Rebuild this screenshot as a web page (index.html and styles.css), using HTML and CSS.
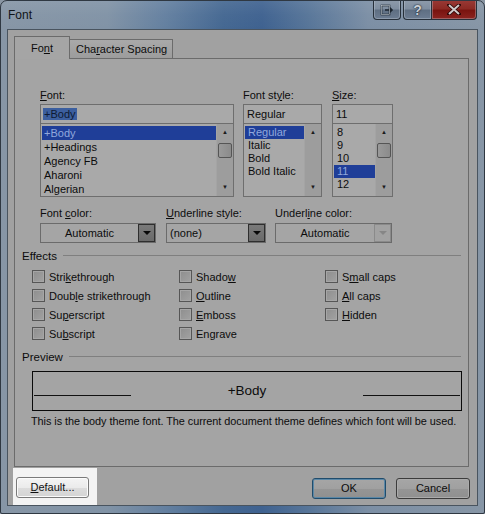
FILE: index.html
```html
<!DOCTYPE html>
<html>
<head>
<meta charset="utf-8">
<link rel="stylesheet" href="styles.css">
</head>
<body>
<div class="window">
  <div class="titlebar">
    <div class="title">Font</div>
    <div class="caption-buttons">
      <div class="cap cap-ctx">
        <svg width="14" height="12" viewBox="0 0 14 12"><rect x="1.5" y="1.5" width="8" height="9" fill="none" stroke="#1d2630" stroke-width="1.6"/><path d="M5 6 H12 M9.5 3.5 L12 6 L9.5 8.5" fill="none" stroke="#1d2630" stroke-width="1.6"/><rect x="1.5" y="1.5" width="8" height="9" fill="none" stroke="#c9d0d8" stroke-width="0.6"/></svg>
      </div>
      <div class="cap cap-help">?</div>
      <div class="cap cap-close">
        <svg width="14" height="11" viewBox="0 0 14 11"><path d="M2 1 L12 10 M12 1 L2 10" stroke="#2a0606" stroke-width="3.6" stroke-linecap="square"/><path d="M2 1 L12 10 M12 1 L2 10" stroke="#cfc8c8" stroke-width="2"/></svg>
      </div>
    </div>
  </div>
  <div class="client">
    <div class="tabs">
      <div class="tab tab-active">Fo<u>n</u>t</div>
      <div class="tab">Cha<u>r</u>acter Spacing</div>
    </div>
    <div class="panel">
      <div class="pickers">
        <div class="picker picker-font">
          <div class="label"><u>F</u>ont:</div>
          <div class="textbox"><span class="sel-text">+Body</span></div>
          <div class="listbox list14">
            <div class="items">
              <div class="item selected">+Body</div>
              <div class="item">+Headings</div>
              <div class="item">Agency FB</div>
              <div class="item">Aharoni</div>
              <div class="item">Algerian</div>
            </div>
            <div class="vscroll">
              <div class="arrow">&#9650;</div>
              <div class="track"><div class="thumb thumb-font"></div></div>
              <div class="arrow">&#9660;</div>
            </div>
          </div>
        </div>
        <div class="picker picker-style">
          <div class="label">Font st<u>y</u>le:</div>
          <div class="textbox">Regular</div>
          <div class="listbox list13">
            <div class="items">
              <div class="item selected">Regular</div>
              <div class="item">Italic</div>
              <div class="item">Bold</div>
              <div class="item">Bold Italic</div>
            </div>
            <div class="vscroll plain">
              <div class="arrow">&#9650;</div>
              <div class="track"></div>
              <div class="arrow">&#9660;</div>
            </div>
          </div>
        </div>
        <div class="picker picker-size">
          <div class="label"><u>S</u>ize:</div>
          <div class="textbox">11</div>
          <div class="listbox list13">
            <div class="items">
              <div class="item">8</div>
              <div class="item">9</div>
              <div class="item">10</div>
              <div class="item selected">11</div>
              <div class="item">12</div>
            </div>
            <div class="vscroll">
              <div class="arrow">&#9650;</div>
              <div class="track"><div class="thumb thumb-size"></div></div>
              <div class="arrow">&#9660;</div>
            </div>
          </div>
        </div>
      </div>

      <div class="combos">
        <div class="combo-field field-color">
          <div class="label">Font <u>c</u>olor:</div>
          <div class="combo">
            <div class="combo-text center">Automatic</div>
            <div class="combo-btn"><span class="tri"></span></div>
          </div>
        </div>
        <div class="combo-field field-ustyle">
          <div class="label"><u>U</u>nderline style:</div>
          <div class="combo">
            <div class="combo-text">(none)</div>
            <div class="combo-btn"><span class="tri"></span></div>
          </div>
        </div>
        <div class="combo-field field-ucolor">
          <div class="label">Underl<u>i</u>ne color:</div>
          <div class="combo">
            <div class="combo-text center">Automatic</div>
            <div class="combo-btn disabled"><span class="tri"></span></div>
          </div>
        </div>
      </div>

      <div class="group-head effects-head"><span>Effects</span><div class="rule"></div></div>
      <div class="effects">
        <div class="col col1">
          <label class="check"><span class="box"></span>Stri<u>k</u>ethrough</label>
          <label class="check"><span class="box"></span>Doub<u>l</u>e strikethrough</label>
          <label class="check"><span class="box"></span>Su<u>p</u>erscript</label>
          <label class="check"><span class="box"></span>Su<u>b</u>script</label>
        </div>
        <div class="col col2">
          <label class="check"><span class="box"></span>Shado<u>w</u></label>
          <label class="check"><span class="box"></span><u>O</u>utline</label>
          <label class="check"><span class="box"></span><u>E</u>mboss</label>
          <label class="check"><span class="box"></span>En<u>g</u>rave</label>
        </div>
        <div class="col col3">
          <label class="check"><span class="box"></span>S<u>m</u>all caps</label>
          <label class="check"><span class="box"></span><u>A</u>ll caps</label>
          <label class="check"><span class="box"></span><u>H</u>idden</label>
        </div>
      </div>

      <div class="group-head preview-head"><span>Preview</span><div class="rule"></div></div>
      <div class="preview">
        <div class="pline"></div>
        <div class="ptext">+Body</div>
        <div class="pline"></div>
      </div>
      <div class="desc">This is the body theme font. The current document theme defines which font will be used.</div>
    </div>
    <div class="footer">
      <div class="highlight">
        <div class="btn btn-default"><u>D</u>efault...</div>
      </div>
      <div class="right-btns">
        <div class="btn btn-ok">OK</div>
        <div class="btn btn-cancel">Cancel</div>
      </div>
    </div>
  </div>
</div>
</body>
</html>
```

FILE: styles.css
```css
* { box-sizing: border-box; }
html, body { margin: 0; padding: 0; }
body {
  width: 485px;
  height: 514px;
  overflow: hidden;
  background: #8a96a3;
  font-family: "Liberation Sans", Arial, sans-serif;
  font-size: 11px;
  color: #0c0c0c;
}
u { text-decoration: underline; text-underline-offset: 1px; }

.window {
  width: 485px;
  height: 514px;
  border: 1px solid #2f3842;
  border-radius: 7px 7px 2px 2px;
  background: linear-gradient(90deg, #8796a6 0%, #8193a6 22%, #6480a0 34%, #456892 46%, #3f6290 54%, #587699 64%, #7c8fa5 76%, #8796a6 100%);
  display: flex;
  flex-direction: column;
  overflow: hidden;
}

.titlebar {
  height: 29px;
  display: flex;
  justify-content: space-between;
  align-items: flex-start;
  background: linear-gradient(180deg, rgba(255,255,255,0.08) 0%, rgba(255,255,255,0.02) 50%, rgba(0,0,0,0) 100%);
}
.title {
  padding: 7px 0 0 7px;
  font-size: 12px;
  color: #101418;
  font-family: "Liberation Sans", Arial, sans-serif;
}
.caption-buttons {
  display: flex;
  margin-right: 7px;
  margin-top: -1px;
}
.cap {
  height: 20px;
  border: 1px solid #27303a;
  border-top: none;
  display: flex;
  align-items: center;
  justify-content: center;
  box-shadow: inset 0 0 0 1px rgba(200,210,222,0.35);
}
.cap-ctx {
  width: 28px;
  border-radius: 0 0 4px 4px;
  margin-right: 2px;
  background: linear-gradient(180deg, #8e9bab 0%, #7f8ea0 45%, #5f6f83 55%, #6c7d92 100%);
}
.cap-help {
  width: 28px;
  border-radius: 0 0 0 4px;
  background: linear-gradient(180deg, #8e9bab 0%, #7f8ea0 45%, #5f6f83 55%, #6c7d92 100%);
  font-weight: bold;
  font-size: 14px;
  color: #c8ced6;
  text-shadow: 0 0 2px #1d2630, 0 0 1px #1d2630;
  border-right: none;
}
.cap-close {
  width: 46px;
  border-radius: 0 0 4px 0;
  background: linear-gradient(180deg, #9a3a36 0%, #8c2a24 45%, #7a1410 55%, #8c2420 100%);
}

.client {
  flex: 1;
  margin: 0 6px 7px 6px;
  background: #a1a1a1;
  border: 1px solid #49545f;
  display: flex;
  flex-direction: column;
  padding: 0 0 0 6px;
}

.tabs {
  display: flex;
  align-items: flex-end;
  height: 28px;
  padding-top: 6px;
}
.tab {
  height: 19px;
  padding: 3px 5px 0 6px;
  border: 1px solid #6b6b6b;
  border-bottom: none;
  background: linear-gradient(180deg, #a9a9a9 0%, #9c9c9c 100%);
  font-size: 11px;
  margin-left: -1px;
}
.tab-active {
  width: 56px;
  margin-left: 0;
  padding: 5px 0 0 0;
  text-align: center;
  background: #a5a5a5;
  position: relative;
  z-index: 1;
  margin-bottom: -1px;
  height: 23px;
}

.panel {
  width: 455px;
  height: 409px;
  border: 1px solid #6b6b6b;
  background: #a4a4a4;
  padding: 29px 0 0 0;
  display: flex;
  flex-direction: column;
}

.label { height: 14px; line-height: 14px; white-space: nowrap; }

.pickers { display: flex; padding-left: 25px; gap: 9px; }
.picker { display: flex; flex-direction: column; }
.picker-font { width: 194px; }
.picker-style { width: 79px; }
.picker-size { width: 61px; margin-left: 1px; }
.picker .label { margin-bottom: 2px; }

.textbox {
  height: 20px;
  border: 1px solid #6e6e6e;
  background: #a9a9a9;
  padding: 3px 0 0 3px;
  line-height: 13px;
}
.sel-text { background: #3c5f9f; color: #0e1a33; padding: 0 1px; margin-left: -1px; }

.listbox {
  height: 74px;
  border: 1px solid #6e6e6e;
  margin-top: -1px;
  background: #a9a9a9;
  display: flex;
}
.items { flex: 1; padding: 2px 0 0 1px; overflow: hidden; }
.list14 .item { height: 14px; line-height: 14px; padding-left: 2px; }
.list13 .items { padding-top: 2px; }
.list13 .item { height: 13px; line-height: 13px; padding-left: 3px; }
.item.selected { background: #1f3e98; color: #91a8dc; }

.vscroll {
  width: 17px;
  display: flex;
  flex-direction: column;
  background: #9d9d9d;
  border-left: 1px solid #a4a4a4;
}
.arrow {
  height: 17px;
  font-size: 6px;
  line-height: 17px;
  text-align: center;
  color: #1b1b1b;
}
.track { flex: 1; }
.thumb {
  height: 15px;
  margin: 2px 1px 0 1px;
  border: 1px solid #555;
  border-radius: 2px;
  background: linear-gradient(90deg, #9a9a9a, #8b8b8b);
}

.combos { display: flex; padding-left: 25px; margin-top: 9px; gap: 10px; }
.combo-field .label { margin-bottom: 3px; }
.field-color { width: 116px; }
.field-ustyle { width: 100px; }
.field-ucolor { width: 117px; margin-left: -1px; }
.combo {
  height: 20px;
  border: 1px solid #6b6b6b;
  background: #a5a5a5;
  display: flex;
}
.combo-text { flex: 1; padding: 0 0 0 3px; line-height: 18px; }
.combo-text.center { text-align: center; padding-left: 0; }
.combo-btn {
  width: 17px;
  height: 18px;
  border: 1px solid #2e2e2e;
  background: linear-gradient(180deg, #7a7a7a 0%, #6a6a6a 100%);
  display: flex;
  align-items: center;
  justify-content: center;
}
.combo-btn.disabled {
  border: 1px solid #8a8a8a;
  background: #a2a2a2;
}
.tri {
  width: 0; height: 0;
  border-left: 4px solid transparent;
  border-right: 4px solid transparent;
  border-top: 4px solid #080808;
}
.combo-btn.disabled .tri { border-top-color: #868686; }

.group-head {
  display: flex;
  align-items: center;
  padding-left: 7px;
  height: 14px;
  line-height: 14px;
}
.group-head span { font-size: 11.5px; }
.rule {
  flex: 1;
  height: 1px;
  background: #7f7f7f;
  margin: 0 7px 1px 6px;
}
.effects-head { margin-top: 6px; }

.effects {
  display: flex;
  padding-left: 17px;
  margin-top: 4px;
}
.col { display: flex; flex-direction: column; }
.col1 { width: 147px; }
.col2 { width: 146px; }
.check {
  height: 19px;
  display: flex;
  align-items: center;
  white-space: nowrap;
}
.box {
  width: 13px;
  height: 13px;
  border: 1px solid #565656;
  background: linear-gradient(135deg, #8e8e8e, #a2a2a2);
  box-shadow: inset 0 0 0 1px #a6a6a6;
  margin-right: 4px;
}

.preview-head { margin-top: 7px; }
.preview {
  margin: 7px 0 0 17px;
  width: 430px;
  height: 40px;
  border: 1px solid #0a0a0a;
  display: flex;
  align-items: flex-start;
  padding: 0 1px;
}
.pline {
  width: 97px;
  height: 1px;
  background: #111;
  margin-top: 23px;
}
.ptext {
  flex: 1;
  text-align: center;
  font-size: 13.5px;
  line-height: 16px;
  margin-top: 11px;
}
.desc {
  margin: 3px 0 0 16px;
  height: 14px;
  line-height: 14px;
  white-space: nowrap;
  letter-spacing: -0.05px;
  font-size: 10.9px;
}

.footer {
  display: flex;
  justify-content: space-between;
  align-items: flex-start;
  margin-top: 1px;
}
.highlight {
  margin-left: -1px;
  width: 84px;
  height: 37px;
  background: #f3f3f3;
  padding: 9px 0 0 3px;
}
.btn {
  height: 21px;
  line-height: 19px;
  text-align: center;
  border: 1px solid #555;
  border-radius: 3px;
  font-size: 11px;
}
.btn-default {
  width: 73px;
  border-color: #7a7a7a;
  background: linear-gradient(180deg, #f4f4f4 0%, #ebebeb 50%, #dcdcdc 51%, #d4d4d4 100%);
  box-shadow: inset 0 0 0 1px #fbfbfb;
  color: #111;
}
.right-btns {
  display: flex;
  gap: 10px;
  margin-top: 10px;
  margin-right: 7px;
}
.btn-ok, .btn-cancel {
  width: 74px;
  background: linear-gradient(180deg, #a6a6a6 0%, #a0a0a0 50%, #959595 51%, #909090 100%);
  box-shadow: inset 0 0 0 1px #ababab;
}
.btn-ok { border-color: #204c6c; box-shadow: inset 0 0 0 1px #5a87a6; }
.btn-cancel { border-color: #3c3c3c; }
```
